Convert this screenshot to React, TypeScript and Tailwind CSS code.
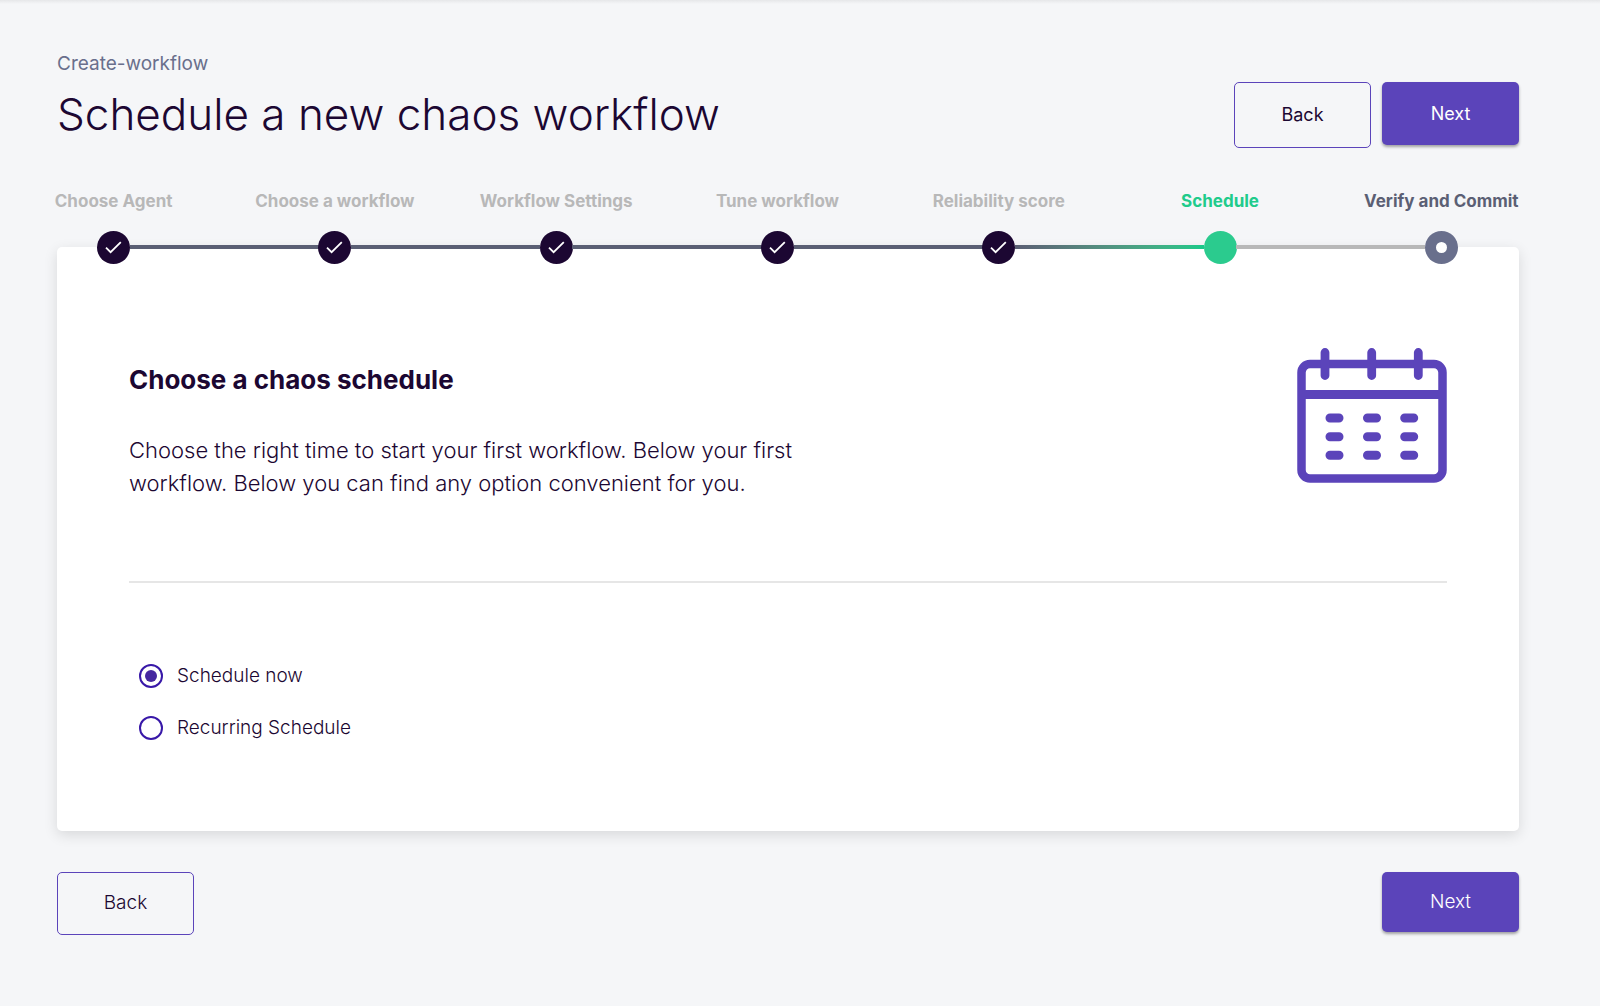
import { useState } from "react";

type StepState = "done" | "current" | "pending";

const steps: { label: string; state: StepState }[] = [
  { label: "Choose Agent", state: "done" },
  { label: "Choose a workflow", state: "done" },
  { label: "Workflow Settings", state: "done" },
  { label: "Tune workflow", state: "done" },
  { label: "Reliability score", state: "done" },
  { label: "Schedule", state: "current" },
  { label: "Verify and Commit", state: "pending" },
];

const labelColor: Record<StepState, string> = {
  done: "text-[#b8b8b8]",
  current: "text-[#20cb8b]",
  pending: "text-[#5b5f74]",
};

const lineColor: Record<StepState, string> = {
  done: "bg-[#5b5f74]",
  current: "bg-linear-to-r from-[#5b5f74] to-[#16c989]",
  pending: "bg-[#b8b8b8]",
};

function StepDot({ state }: { state: StepState }) {
  if (state === "done") {
    return (
      <span className="relative flex size-[33px] items-center justify-center rounded-full bg-[#1c0732]">
        <svg width="17" height="13" viewBox="0 0 17 13" fill="none" stroke="white" strokeWidth="1.8" aria-hidden="true">
          <path d="M1 6.6 5.6 11.2 15.8 1.2" />
        </svg>
      </span>
    );
  }
  if (state === "current") {
    return <span className="relative size-[33px] rounded-full bg-[#2bcb8e]" />;
  }
  return (
    <span className="relative flex size-[33px] items-center justify-center rounded-full bg-[#696f8c]">
      <span className="size-[11px] rounded-full bg-white" />
    </span>
  );
}

function Stepper() {
  return (
    <ol className="relative z-10 -mr-[33px] -ml-[54px] grid grid-cols-7">
      {steps.map((step, i) => (
        <li key={step.label} className="relative flex flex-col items-center gap-[18px]">
          <span className={`text-[17px] leading-6 font-bold whitespace-nowrap ${labelColor[step.state]}`}>{step.label}</span>
          {i > 0 && (
            <span className={`absolute right-[calc(50%+16px)] bottom-[15px] h-1 w-[calc(100%-32px)] ${lineColor[step.state]}`} />
          )}
          <StepDot state={step.state} />
        </li>
      ))}
    </ol>
  );
}

function CalendarIcon() {
  return (
    <svg width="150" height="136" viewBox="0 0 150 136" fill="none" stroke="#5b44ba" aria-hidden="true">
      <rect x="4.5" y="16" width="141" height="114.5" rx="8.5" strokeWidth="8.5" />
      <path d="M4 46.5h142" strokeWidth="9" />
      <path d="M28 4.500v23M74.700 4.500v23M121.300 4.500v23" strokeWidth="8.800" strokeLinecap="round" />
      <path
        d="M33 70h9M70.500 70h9M107.700 70h9M33 88.700h9M70.500 88.700h9M107.700 88.700h9M33 107.300h9M70.500 107.300h9M107.700 107.300h9"
        strokeWidth="9"
        strokeLinecap="round"
      />
    </svg>
  );
}

const options = [
  { value: "now", label: "Schedule now" },
  { value: "recurring", label: "Recurring Schedule" },
];

export default function App() {
  const [schedule, setSchedule] = useState("now");

  return (
    <div className="min-h-screen bg-[#f5f6f8] font-['Inter',sans-serif] text-[#1c0732]">
      <div className="h-1 bg-linear-to-b from-[#e6e7e9] to-[#f5f6f8]" />
      <main className="pt-12 pr-[81px] pb-[71px] pl-[57px]">
        <header className="flex items-start justify-between">
          <div>
            <p className="text-[19px] leading-6 text-[#696f8c]">Create-workflow</p>
            <h1 className="mt-[10px] text-[44px] leading-[56px] font-light">Schedule a new chaos workflow</h1>
          </div>
          <div className="mt-[30px] flex items-start gap-[11px]">
            <button type="button" className="h-[66px] w-[137px] rounded-[5px] border border-[#5b44ba] text-lg">
              Back
            </button>
            <button type="button" className="h-[63px] w-[137px] rounded-[5px] bg-[#5b44ba] text-lg text-white shadow-[0_2px_3px_rgba(0,0,0,0.35)]">
              Next
            </button>
          </div>
        </header>

        <div className="mt-[41px]">
          <Stepper />
        </div>

        <section className="-mt-[17px] rounded-[5px] bg-white px-[72px] pt-[101px] pb-[89px] shadow-[0_4px_14px_rgba(0,0,0,0.12)]">
          <div className="flex items-start justify-between border-b-2 border-[#e6e6e6] pb-20">
            <div className="pt-[14px]">
              <h2 className="text-[26px] leading-9 font-bold">Choose a chaos schedule</h2>
              <p className="mt-9 mb-px max-w-[700px] text-[22px] leading-[33px] font-light">
                Choose the right time to start your first workflow. Below your first workflow. Below you can find any option
                convenient for you.
              </p>
            </div>
            <CalendarIcon />
          </div>
          <div role="radiogroup" aria-label="Schedule type" className="mt-[79px] ml-[10px] flex flex-col items-start gap-6">
            {options.map((o) => (
              <label key={o.value} className="flex items-center gap-[14px] text-[19px] leading-7 font-light">
                <input
                  type="radio"
                  name="schedule"
                  value={o.value}
                  checked={schedule === o.value}
                  onChange={() => setSchedule(o.value)}
                  className="size-6 appearance-none rounded-full border-2 border-[#3818a8] bg-white bg-clip-content p-1 checked:bg-[#4527a0]"
                />
                {o.label}
              </label>
            ))}
          </div>
        </section>

        <footer className="mt-[41px] flex items-start justify-between">
          <button type="button" className="h-[63px] w-[137px] rounded-[5px] border border-[#5b44ba] text-[19px] font-light">
            Back
          </button>
          <button type="button" className="h-[60px] w-[137px] rounded-[5px] bg-[#5b44ba] text-[19px] font-light text-white shadow-[0_2px_3px_rgba(0,0,0,0.35)]">
            Next
          </button>
        </footer>
      </main>
    </div>
  );
}
